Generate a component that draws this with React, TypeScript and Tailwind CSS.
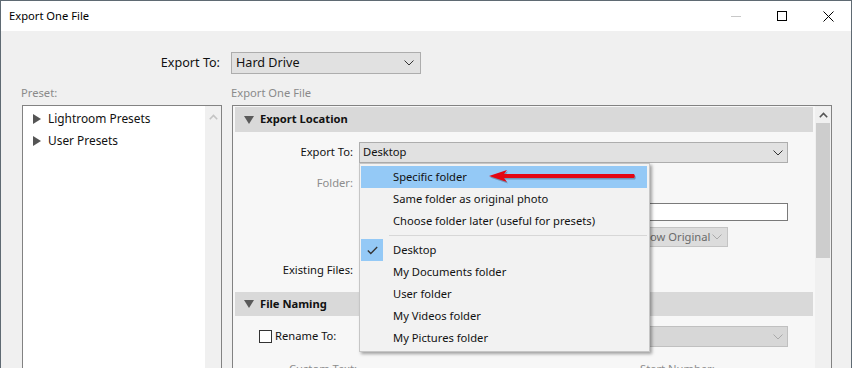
import React from "react";

function Chevron({ color = "#333" }: { color?: string }) {
  return (
    <svg width="10" height="6" viewBox="0 0 10 6">
      <path d="M0.5 0.5 L5 5 L9.5 0.5" fill="none" stroke={color} strokeWidth="1" />
    </svg>
  );
}

function TriRight() {
  return (
    <svg width="8" height="10" viewBox="0 0 8 10">
      <path d="M0 0 L8 5 L0 10 Z" fill="#555" />
    </svg>
  );
}

function TriDown() {
  return (
    <svg width="10" height="8" viewBox="0 0 10 8">
      <path d="M0 0 L10 0 L5 8 Z" fill="#5a5a5a" />
    </svg>
  );
}

function Caret({ color }: { color: string }) {
  return (
    <svg width="9" height="6" viewBox="0 0 9 6">
      <path d="M0.8 5.2 L4.5 1.5 L8.2 5.2" fill="none" stroke={color} strokeWidth="1.6" />
    </svg>
  );
}

function MenuItem({ label, active }: { label: string; active?: boolean }) {
  return (
    <div className={"h-[22px] flex items-center pl-[32px] whitespace-nowrap " + (active ? "bg-[#94c9f6]" : "")}>
      {label}
    </div>
  );
}

export default function App() {
  return (
    <div className="w-[852px] h-[368px] overflow-hidden relative bg-[#f0f0f0] border-t border-l border-r border-[#5f6a73] flex flex-col font-['Noto_Sans',sans-serif] text-[11.2px] text-[#111]">
      {/* Title bar */}
      <div className="h-[30px] bg-white flex items-center shrink-0">
        <div className="pl-[8px] text-[11.2px] text-black">Export One File</div>
        <div className="ml-auto flex items-center h-full">
          <div className="w-[46px] h-full flex items-center justify-center">
            <svg width="10" height="10" viewBox="0 0 10 10">
              <path d="M0 5.5 H10" stroke="#c8c8c8" strokeWidth="1" />
            </svg>
          </div>
          <div className="w-[46px] h-full flex items-center justify-center">
            <svg width="10" height="10" viewBox="0 0 10 10">
              <rect x="0.5" y="0.5" width="9" height="9" fill="none" stroke="#000" strokeWidth="1" />
            </svg>
          </div>
          <div className="w-[46px] h-full flex items-center justify-center">
            <svg width="11" height="11" viewBox="0 0 11 11">
              <path d="M0.5 0.5 L10.5 10.5 M10.5 0.5 L0.5 10.5" stroke="#000" strokeWidth="1" />
            </svg>
          </div>
        </div>
      </div>

      {/* Body */}
      <div className="flex-1 pl-[20px] flex flex-col">
        {/* Export To row */}
        <div className="mt-[21px] h-[22px] flex items-center gap-[10px]">
          <div className="w-[200px] text-right text-[12.6px] pr-[1px]">Export To:</div>
          <div className="w-[190px] h-[22px] bg-[#e1e1e1] border border-[#adadad] flex items-center pl-[4px] pr-[6px] text-[12.6px]">
            <span>Hard Drive</span>
            <span className="ml-auto">
              <Chevron />
            </span>
          </div>
        </div>

        {/* Labels */}
        <div className="mt-[12px] h-[14px] flex items-center gap-[10px] text-[#8a8a8a]">
          <div className="w-[200px]">Preset:</div>
          <div>Export One File</div>
        </div>

        {/* Panels */}
        <div className="mt-[5px] flex gap-[10px] pl-[1px]">
          {/* Left panel */}
          <div className="w-[200px] h-[300px] border border-[#828282] bg-white flex">
            <div className="flex-1 pt-[2px] text-[11.9px]">
              <div className="h-[22px] flex items-center pl-[10px] gap-[7px]">
                <TriRight />
                <span>Lightroom Presets</span>
              </div>
              <div className="h-[22px] flex items-center pl-[10px] gap-[7px]">
                <TriRight />
                <span>User Presets</span>
              </div>
            </div>
            <div className="w-[16px] bg-[#f0f0f0] flex justify-center pt-[8px]">
              <Caret color="#c4c4c4" />
            </div>
          </div>

          {/* Right panel */}
          <div className="w-[600px] h-[300px] border border-[#828282] bg-[#f7f7f7] flex">
            <div className="flex-1 px-[2px] pt-[1px] flex flex-col">
              {/* Header */}
              <div className="h-[25px] bg-[#d9d9d9] flex items-center pl-[9px] gap-[6px]">
                <TriDown />
                <span className="font-bold">Export Location</span>
              </div>
              {/* Export To */}
              <div className="mt-[10px] h-[21px] flex items-center gap-[6px]">
                <div className="w-[118px] text-right">Export To:</div>
                <div className="w-[429px] h-[21px] bg-[#e1e1e1] border border-[#adadad] flex items-center pl-[3px] pr-[4px]">
                  <span>Desktop</span>
                  <span className="ml-auto">
                    <Chevron />
                  </span>
                </div>
              </div>
              {/* Folder */}
              <div className="mt-[9px] h-[22px] flex items-center gap-[6px]">
                <div className="w-[118px] text-right text-[#8d8d8d]">Folder:</div>
              </div>
              {/* text field */}
              <div className="mt-[9px] h-[18px] flex items-center gap-[6px]">
                <div className="w-[118px]"></div>
                <div className="w-[429px] h-[18px] bg-white border border-[#7a7a7a]"></div>
              </div>
              {/* Show Original */}
              <div className="mt-[6px] h-[20px] flex items-center gap-[6px]">
                <div className="w-[118px]"></div>
                <div className="w-[429px] flex">
                  <div className="ml-[270px] w-[99px] h-[20px] bg-[#dcdcdc] border border-[#c4c4c4] flex items-center pl-[7px] pr-[5px] text-[#6a6a6a] whitespace-nowrap">
                    <span>Show Original</span>
                    <span className="ml-auto">
                      <Chevron color="#aaa" />
                    </span>
                  </div>
                </div>
              </div>
              {/* Existing files */}
              <div className="mt-[12px] h-[22px] flex items-center gap-[6px]">
                <div className="w-[118px] text-right">Existing Files:</div>
              </div>
              {/* Header 2 */}
              <div className="mt-[11px] h-[24px] bg-[#d9d9d9] flex items-center pl-[9px] gap-[6px]">
                <TriDown />
                <span className="font-bold">File Naming</span>
              </div>
              {/* Rename */}
              <div className="mt-[10px] h-[21px] flex items-center gap-[6px]">
                <div className="w-[118px] flex items-center pl-[24px] gap-[3px]">
                  <div className="w-[13px] h-[13px] border border-[#333] bg-white shrink-0"></div>
                  <span className="whitespace-nowrap">Rename To:</span>
                </div>
                <div className="w-[429px] h-[21px] bg-[#d7d7d7] border border-[#c0c0c0] flex items-center pr-[4px]">
                  <span className="ml-auto">
                    <Chevron color="#aaa" />
                  </span>
                </div>
              </div>
              {/* Custom text */}
              <div className="mt-[11px] h-[22px] flex items-center text-[#8d8d8d]">
                <div className="pl-[54px] w-[405px]">Custom Text:</div>
                <div>Start Number:</div>
              </div>
            </div>
            {/* Scrollbar */}
            <div className="w-[16px] bg-[#f0f0f0] flex flex-col items-center">
              <div className="h-[17px] flex items-center justify-center">
                <Caret color="#555" />
              </div>
              <div className="w-[14px] h-[135px] bg-[#cdcdcd]"></div>
            </div>
          </div>
        </div>
      </div>

      {/* Dropdown menu */}
      <div className="absolute left-[358px] top-[162px] w-[291px] h-[189px] bg-[#f2f2f2] border border-[#c6c6c6] shadow-[2px_2px_3px_rgba(0,0,0,0.35)] pl-[1px] pr-[2px] pt-[2px]">
        <MenuItem label="Specific folder" active />
        <MenuItem label="Same folder as original photo" />
        <MenuItem label="Choose folder later (useful for presets)" />
        <div className="h-[7px] flex items-center pl-[28px]">
          <div className="h-px w-full bg-[#d7d7d7]"></div>
        </div>
        <div className="h-[22px] flex items-center relative">
          <div className="w-[22px] h-[22px] bg-[#94c9f6] flex items-center justify-center">
            <svg width="11" height="9" viewBox="0 0 11 9">
              <path d="M0.8 4.5 L3.8 7.5 L10.2 1" fill="none" stroke="#333" strokeWidth="1.3" />
            </svg>
          </div>
          <span className="pl-[10px]">Desktop</span>
        </div>
        <MenuItem label="My Documents folder" />
        <MenuItem label="User folder" />
        <MenuItem label="My Videos folder" />
        <MenuItem label="My Pictures folder" />
      </div>

      {/* Red arrow */}
      <svg className="absolute left-[485px] top-[167px]" width="154" height="18" viewBox="0 0 154 18">
        <g transform="translate(1,1.5)" fill="#000" opacity="0.25">
          <path d="M3 8 L21 2 L18 6 L148 6 Q149.5 8 148 10 L18 10 L21 14 Z" />
        </g>
        <path d="M3 8 L21 2 L18 6 L148 6 Q149.5 8 148 10 L18 10 L21 14 Z" fill="#e30613" />
      </svg>
    </div>
  );
}
